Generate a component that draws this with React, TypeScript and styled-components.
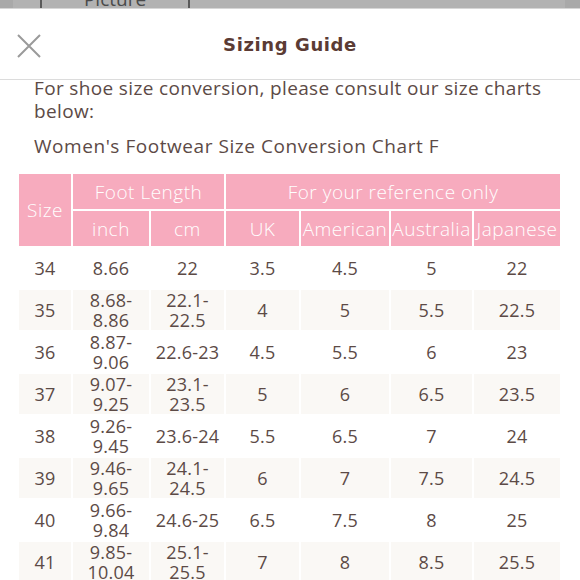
import styled, { createGlobalStyle } from "styled-components";

const GlobalStyle = createGlobalStyle`
  html, body {
    margin: 0;
    padding: 0;
    background: #ffffff;
    font-family: "Open Sans", "Liberation Sans", sans-serif;
  }
  * { box-sizing: border-box; }
`;

const Page = styled.div`
  width: 580px;
  height: 580px;
  overflow: hidden;
  background: #fff;
`;

const DimStrip = styled.div`
  height: 9px;
  overflow: hidden;
  display: flex;
  background: #b2b2b2;
  border-bottom: 1px solid #d6d6d6;
`;

const DimEdge = styled.div<{ $w: number }>`
  width: ${p => p.$w}px;
  background: #a9a9a9;
`;

const DimTab = styled.div`
  margin-left: 27px;
  width: 150px;
  height: 24px;
  margin-top: -12px;
  border-left: 2px solid #5a5a5a;
  border-right: 2px solid #5a5a5a;
  text-align: center;
  font-size: 19px;
  line-height: 22px;
  color: #4a4a4a;
  flex-shrink: 0;
`;

const Spacer = styled.div`
  flex: 1;
`;

const Header = styled.header`
  height: 71px;
  display: flex;
  align-items: center;
  justify-content: center;
  position: relative;
  border-bottom: 1px solid #dcdcdc;
`;

const CloseButton = styled.button`
  position: absolute;
  left: 14px;
  top: 22px;
  width: 30px;
  height: 30px;
  padding: 0;
  border: 0;
  background: none;
  display: flex;
  align-items: center;
  justify-content: center;
`;

const Title = styled.h1`
  margin: 1px 0 0;
  font-family: "DejaVu Sans", sans-serif;
  font-weight: bold;
  font-size: 18px;
  letter-spacing: 0.6px;
  color: #5b3b34;
`;

const Content = styled.div`
  padding: 0 0 0 34px;
  color: #5c4a46;
`;

const Intro = styled.p`
  margin: -3px 0 0;
  font-size: 19px;
  line-height: 23px;
  letter-spacing: 0.35px;
`;

const ChartTitle = styled.p`
  margin: 12px 0 0;
  font-size: 19px;
  line-height: 23px;
  letter-spacing: 0.55px;
`;

const Table = styled.table`
  margin: 14px 0 0 -17px;
  border-collapse: separate;
  border-spacing: 2px;
  table-layout: fixed;
  width: 545px;
`;

const HeadCell = styled.th`
  background: #f7abbe;
  color: #ffffff;
  font-weight: 300;
  font-size: 19px;
  height: 35px;
  padding: 0;
  text-align: center;
  white-space: nowrap;
  letter-spacing: 0.5px;
`;

const Row = styled.tr<{ $shade: boolean }>`
  background: ${p => (p.$shade ? "#faf8f5" : "#ffffff")};
`;

const Cell = styled.td`
  height: 40px;
  padding: 0;
  text-align: center;
  font-size: 18px;
  line-height: 20px;
  letter-spacing: 0.2px;
  color: #5c4a46;
`;

const widths = [52, 76, 73, 73, 88, 81, 86];

const rows: string[][] = [
  ["34", "8.66", "22", "3.5", "4.5", "5", "22"],
  ["35", "8.68-\n8.86", "22.1-\n22.5", "4", "5", "5.5", "22.5"],
  ["36", "8.87-\n9.06", "22.6-23", "4.5", "5.5", "6", "23"],
  ["37", "9.07-\n9.25", "23.1-\n23.5", "5", "6", "6.5", "23.5"],
  ["38", "9.26-\n9.45", "23.6-24", "5.5", "6.5", "7", "24"],
  ["39", "9.46-\n9.65", "24.1-\n24.5", "6", "7", "7.5", "24.5"],
  ["40", "9.66-\n9.84", "24.6-25", "6.5", "7.5", "8", "25"],
  ["41", "9.85-\n10.04", "25.1-\n25.5", "7", "8", "8.5", "25.5"],
];

const CloseIcon = () => (
  <svg width="26" height="26" viewBox="0 0 26 26">
    <path d="M2 2 L24 24 M24 2 L2 24" stroke="#9a9a9a" strokeWidth="2" fill="none" />
  </svg>
);

const App = () => {
  return (
    <Page>
      <GlobalStyle />
      <DimStrip>
        <DimEdge $w={13} />
        <DimTab>Picture</DimTab>
        <Spacer />
        <DimEdge $w={15} />
      </DimStrip>
      <Header>
        <CloseButton aria-label="Close">
          <CloseIcon />
        </CloseButton>
        <Title>Sizing Guide</Title>
      </Header>
      <Content>
        <Intro>
          For shoe size conversion, please consult our size charts
          <br />
          below:
        </Intro>
        <ChartTitle>Women's Footwear Size Conversion Chart F</ChartTitle>
        <Table>
          <colgroup>
            {widths.map((w, i) => (
              <col key={i} style={{ width: w }} />
            ))}
          </colgroup>
          <thead>
            <tr>
              <HeadCell rowSpan={2}>Size</HeadCell>
              <HeadCell colSpan={2}>Foot Length</HeadCell>
              <HeadCell colSpan={4}>For your reference only</HeadCell>
            </tr>
            <tr>
              <HeadCell>inch</HeadCell>
              <HeadCell>cm</HeadCell>
              <HeadCell>UK</HeadCell>
              <HeadCell>American</HeadCell>
              <HeadCell>Australia</HeadCell>
              <HeadCell>Japanese</HeadCell>
            </tr>
          </thead>
          <tbody>
            {rows.map((r, i) => (
              <Row key={r[0]} $shade={i % 2 === 1}>
                {r.map((v, j) => (
                  <Cell key={j}>
                    {v.split("\n").map((line, k) => (
                      <div key={k}>{line}</div>
                    ))}
                  </Cell>
                ))}
              </Row>
            ))}
          </tbody>
        </Table>
      </Content>
    </Page>
  );
};

export default App;
